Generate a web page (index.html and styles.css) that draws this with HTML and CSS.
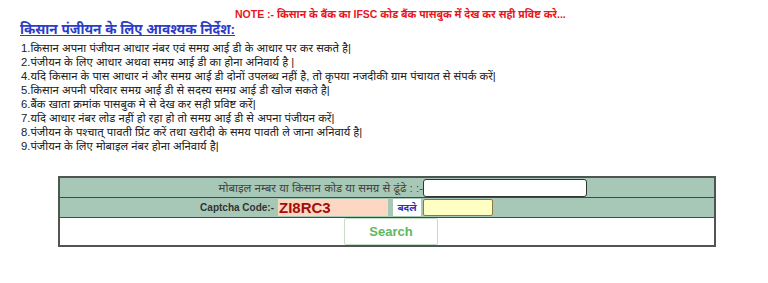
FILE: index.html
```html
<!DOCTYPE html>
<html lang="hi">
<head>
<meta charset="utf-8">
<title>किसान पंजीयन</title>
<link rel="stylesheet" href="styles.css">
</head>
<body>
<div class="page">
  <div class="note">NOTE :- किसान के बैंक का IFSC कोड बैंक पासबुक में देख कर सही प्रविष्ट करे...</div>
  <h2 class="title">किसान पंजीयन के लिए आवश्यक निर्देश:</h2>
  <ul class="rules">
    <li>1.किसान अपना पंजीयन आधार नंबर एवं समग्र आई डी के आधार पर कर सकते है|</li>
    <li>2.पंजीयन के लिए आधार अथवा समग्र आई डी का होना अनिवार्य है |</li>
    <li>4.यदि किसान के पास आधार नं और समग्र आई डी दोनों उपलब्ध नहीं है, तो कृपया नजदीकी ग्राम पंचायत से संपर्क करें|</li>
    <li>5.किसान अपनी परिवार समग्र आई डी से सदस्य समग्र आई डी खोज सकते है|</li>
    <li>6.बैंक खाता क्रमांक पासबुक मे से देख कर सही प्रविष्ट करें|</li>
    <li>7.यदि आधार नंबर लोड नहीं हो रहा हो तो समग्र आई डी से अपना पंजीयन करें|</li>
    <li>8.पंजीयन के पश्चात् पावती प्रिंट करें तथा खरीदी के समय पावती ले जाना अनिवार्य है|</li>
    <li>9.पंजीयन के लिए मोबाइल नंबर होना अनिवार्य है|</li>
  </ul>
  <table class="search-table">
    <tr class="row-green">
      <td class="label">मोबाइल नम्बर या किसान कोड या समग्र से ढूंढे : :-</td>
      <td class="field"><input class="text-input" type="text"></td>
    </tr>
    <tr class="row-green">
      <td class="label">
        <span class="cap-label">Captcha Code:-</span><span class="cap-code">ZI8RC3</span><span class="change">बदले</span>
      </td>
      <td class="field"><input class="cap-input" type="text"></td>
    </tr>
    <tr class="row-white">
      <td colspan="2" class="btn-cell"><button class="search-btn" type="button">Search</button></td>
    </tr>
  </table>
</div>
</body>
</html>
```
FILE: styles.css
```css
html, body {
  margin: 0;
  padding: 0;
  background: #ffffff;
}
body {
  font-family: "Liberation Sans", Arial, "Noto Sans", sans-serif;
  color: #222;
}
.page {
  padding: 0 0 0 20px;
}
.note {
  margin-left: 215px;
  padding-top: 8px;
  height: 12px;
  font-size: 10.5px;
  font-weight: bold;
  color: #e8161e;
  line-height: 12px;
}
.title {
  margin: 0;
  padding-top: 1px;
  font-size: 13.6px;
  font-weight: bold;
  color: #2b3cc8;
  text-decoration: underline;
  line-height: 18px;
}
.rules {
  list-style: none;
  margin: 2px 0 0 0;
  padding: 0 0 0 1px;
  font-size: 11.3px;
  line-height: 14px;
  color: #222;
}
.search-table {
  margin: 23px 0 0 38px;
  width: 658px;
  border-collapse: collapse;
  border: 2px solid #4e5552;
}
.search-table td {
  padding: 0;
}
.row-green td {
  background: #a8c8b7;
  border-bottom: 1px solid #3f4a45;
  height: 19px;
}
.label {
  width: 363px;
  text-align: right;
  font-size: 11.5px;
  color: #444;
  white-space: nowrap;
}
.field {
  text-align: left;
}
.text-input {
  display: block;
  box-sizing: border-box;
  width: 164px;
  height: 18px;
  margin: 0;
  border: 1px solid #333;
  border-radius: 3px;
  background: #fff;
  padding: 0;
}
.cap-label {
  font-weight: bold;
  font-size: 10px;
  color: #333;
  margin-right: 4px;
}
.cap-code {
  display: inline-block;
  width: 110px;
  height: 17px;
  line-height: 17px;
  background: #fcd8c2;
  color: #a30d0d;
  font-size: 15px;
  font-weight: bold;
  text-align: left;
  vertical-align: middle;
  padding-left: 1px;
  box-sizing: border-box;
}
.change {
  display: inline-block;
  width: 28px;
  height: 17px;
  line-height: 17px;
  margin-left: 5px;
  margin-right: 2px;
  background: #fff;
  color: #2b2fb8;
  font-size: 10px;
  font-weight: bold;
  text-align: center;
  vertical-align: middle;
}
.cap-input {
  display: block;
  box-sizing: border-box;
  width: 70px;
  height: 17px;
  margin: 0;
  border: 1px solid #8a7a3a;
  border-radius: 2px;
  background: #ffffc4;
  padding: 0;
}
.row-white td {
  background: #fff;
  height: 27px;
}
.btn-cell {
  padding: 0 0 0 284px !important;
  text-align: left;
}
.search-btn {
  display: block;
  width: 94px;
  height: 27px;
  background: #fff;
  border: 1px solid #c5dcc5;
  border-radius: 2px;
  color: #5fb760;
  font-family: "Liberation Sans", Arial, sans-serif;
  font-size: 13px;
  font-weight: bold;
  padding: 0;
}
```
